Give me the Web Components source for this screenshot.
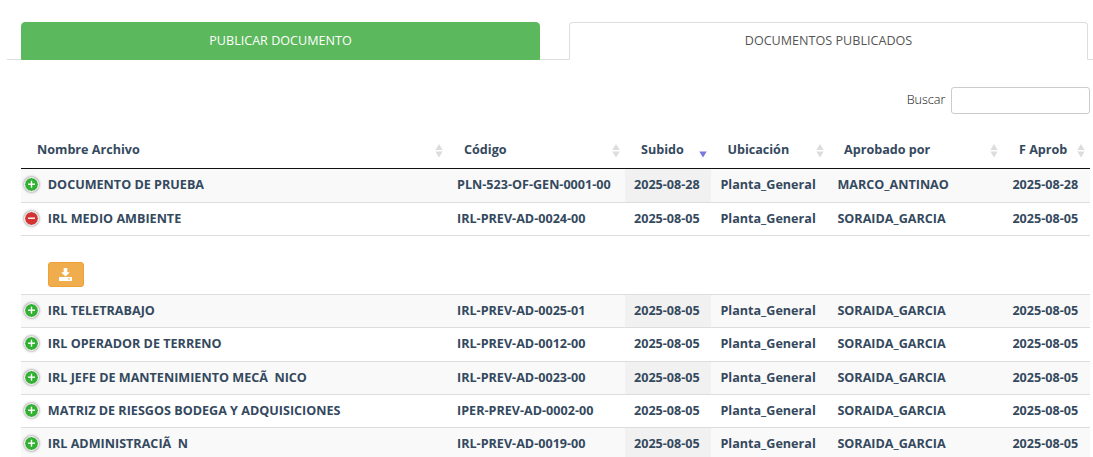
<!DOCTYPE html>
<html lang="es">
<head>
<meta charset="utf-8">
<title>Documentos publicados</title>
<style>
html{overflow:hidden}
body{margin:0;background:#fff;height:457px;overflow:hidden;font:12.6px/20px "Open Sans",sans-serif;color:#34495e}
</style>
</head>
<body>
<documents-page></documents-page>
<script>
const define = (name, html, setup) => customElements.define(name, class extends HTMLElement {
  connectedCallback() {
    if (this.shadowRoot) return;
    const root = this.attachShadow({ mode: "open" });
    const t = document.createElement("template");
    t.innerHTML = html;
    root.append(t.content.cloneNode(true));
    if (setup) setup(this, root);
  }
});

define("nav-tab", `<style>
:host{display:block;box-sizing:border-box;width:519px;height:38px;border:1px solid #ddd;border-bottom-color:#fff;border-radius:4px 4px 0 0;text-align:center;line-height:36px;color:#555;background:#fff}
:host([green]){background:#5cb85c;border-color:#5cb85c;color:#fff}
</style><slot></slot>`);

define("tab-bar", `<style>
:host{display:flex;gap:29px;height:37px;margin:22px 0 0 7px;padding-left:14px;border-bottom:1px solid #ddd}
</style><slot></slot>`);

define("search-field", `<style>
:host{display:flex;justify-content:flex-end;align-items:center;gap:5.6px;margin:27px 3px 0 0;height:27px;color:#111;font-weight:300}
input{box-sizing:border-box;width:139px;height:27px;border:1px solid #ccc;border-radius:3px;margin:0;background:#fff;outline:0}
span{padding-bottom:2px}
</style><span><slot></slot></span><input aria-label="Buscar">`);

define("sort-mark", `<style>
:host{display:block;width:8px;height:14px}svg{display:block}
.u,.d{fill:#ddd}:host([desc]) .u{display:none}:host([desc]) .d{fill:#7878e0}
</style><svg width="8" height="14"><path class="u" d="M4 0 7.7 6H.3z"/><path class="d" d="M.3 7.5H7.7L4 13.5z"/></svg>`);

define("head-cell", `<style>
:host{display:flex;justify-content:space-between;align-items:center;box-sizing:border-box;white-space:nowrap;font-weight:700}
span{padding-top:2px}
sort-mark{margin-top:4px}
</style><span><slot></slot></span><sort-mark></sort-mark>`, (host, root) => {
  if (host.hasAttribute("desc")) root.querySelector("sort-mark").setAttribute("desc", "");
});

define("toggle-dot", `<style>
:host{display:block;box-sizing:border-box;width:15px;height:15px;border:1px solid #fff;border-radius:50%;background:#31b131;background-clip:padding-box;box-shadow:0 0 2.7px #666}
:host([open]){background-color:#d33333}
:host([open]) .v{display:none}svg{display:block}
</style><svg width="13" height="13" stroke="#fff" stroke-width="1.4"><path d="M3 6.2h7"/><path class="v" d="M6.5 2.7v7"/></svg>`);

define("doc-row", `<style>
:host{display:grid;grid-template-columns:427px 177px 86px 117px 175px 87px;box-sizing:border-box;height:33px;border-top:1px solid #ddd;font-weight:700;line-height:32px;white-space:pre}
:host([first]){border-top:0}
:host([tall]){height:34px}
:host([odd]){background:#f9f9f9}
:host([odd]) .s{background:#f1f1f1}
div{padding-left:9px}
.u,.a,.f{padding-left:9.4px}
.n{display:flex;padding-left:3px;gap:8.8px}
toggle-dot{margin-top:8px}
</style><div class="n"><toggle-dot></toggle-dot><span></span></div><div class="c"></div><div class="s"></div><div class="u">Planta_General</div><div class="a"></div><div class="f"></div>`, (host, root) => {
  const v = k => host.getAttribute(k);
  root.querySelector(".n span").textContent = v("name");
  root.querySelector(".c").textContent = v("code");
  root.querySelector(".s").textContent = root.querySelector(".f").textContent = v("date");
  root.querySelector(".a").textContent = v("by");
  if (host.hasAttribute("open")) root.querySelector("toggle-dot").setAttribute("open", "");
});

define("download-row", `<style>
:host{display:flex;box-sizing:border-box;height:59px;border-top:1px solid #ddd;padding:26px 0 0 27px}
button{display:flex;align-items:center;justify-content:center;box-sizing:border-box;width:36px;height:25px;padding:0 2px 0 0;border:1px solid #eea236;border-radius:3px;background:#f0ad4e}
</style><button aria-label="Descargar"><svg width="13" height="13" viewBox="0 0 13 13" fill="#fff"><path d="M4.7 0h3.6v4.2h2.6L6.5 8.6 2.1 4.2h2.6z"/><path fill-rule="evenodd" d="M0 9h13v4H0zM9 10.4v1.2h2v-1.2z"/></svg></button>`);

define("doc-table", `<style>
:host{display:block;width:1069px;margin:18px 0 0 21px}
header{display:grid;grid-template-columns:427px 177px 86px 117px 175px 87px;height:36px;border-bottom:1px solid #111}
head-cell{padding:0 5px 2px 16px}
head-cell[desc]{padding-right:4.5px}
head-cell:nth-child(4){padding:0 4.5px 2px 16.4px}
</style><header><head-cell>Nombre Archivo</head-cell><head-cell>Código</head-cell><head-cell desc>Subido</head-cell><head-cell>Ubicación</head-cell><head-cell>Aprobado por</head-cell><head-cell>F Aprob</head-cell></header><slot></slot>`);

define("documents-page", `<style>:host{display:block}</style>
<tab-bar><nav-tab green>PUBLICAR DOCUMENTO</nav-tab><nav-tab>DOCUMENTOS PUBLICADOS</nav-tab></tab-bar>
<search-field>Buscar</search-field>
<doc-table>
<doc-row first odd name="DOCUMENTO DE PRUEBA" code="PLN-523-OF-GEN-0001-00" date="2025-08-28" by="MARCO_ANTINAO"></doc-row>
<doc-row open name="IRL MEDIO AMBIENTE" code="IRL-PREV-AD-0024-00" date="2025-08-05" by="SORAIDA_GARCIA"></doc-row>
<download-row></download-row>
<doc-row odd name="IRL TELETRABAJO" code="IRL-PREV-AD-0025-01" date="2025-08-05" by="SORAIDA_GARCIA"></doc-row>
<doc-row tall name="IRL OPERADOR DE TERRENO" code="IRL-PREV-AD-0012-00" date="2025-08-05" by="SORAIDA_GARCIA"></doc-row>
<doc-row odd name="IRL JEFE DE MANTENIMIENTO MECÃ  NICO" code="IRL-PREV-AD-0023-00" date="2025-08-05" by="SORAIDA_GARCIA"></doc-row>
<doc-row name="MATRIZ DE RIESGOS BODEGA Y ADQUISICIONES" code="IPER-PREV-AD-0002-00" date="2025-08-05" by="SORAIDA_GARCIA"></doc-row>
<doc-row odd name="IRL ADMINISTRACIÃ  N" code="IRL-PREV-AD-0019-00" date="2025-08-05" by="SORAIDA_GARCIA"></doc-row>
</doc-table>`);
</script>
</body>
</html>
